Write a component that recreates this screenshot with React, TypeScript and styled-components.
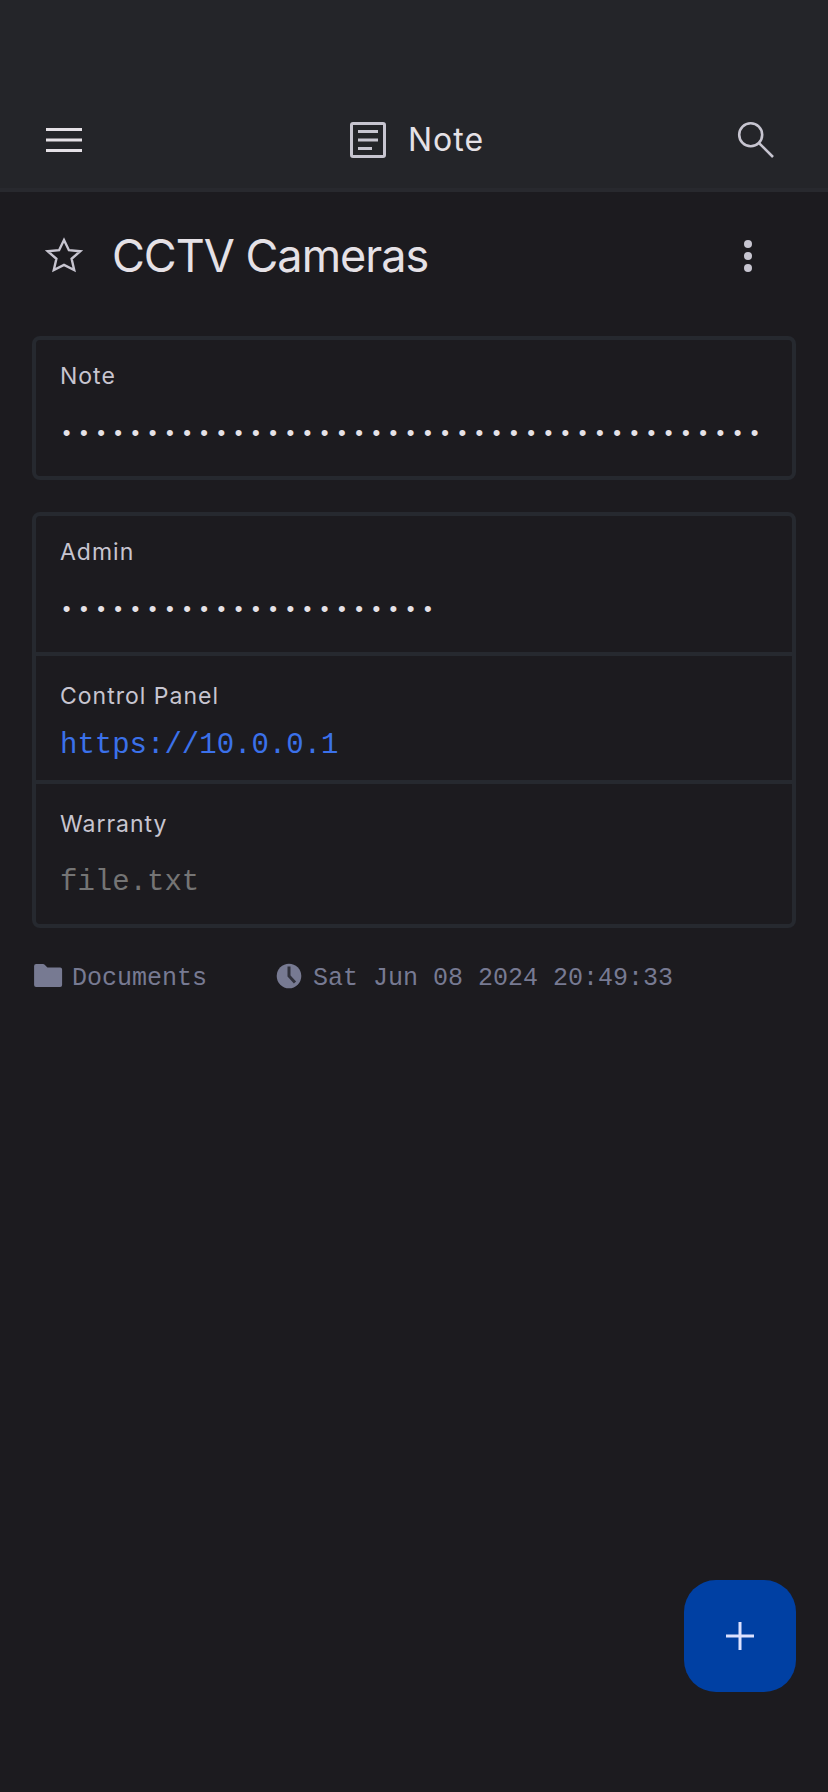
import React from "react";
import styled, { createGlobalStyle } from "styled-components";

const GlobalStyle = createGlobalStyle`
  *, *::before, *::after { box-sizing: border-box; }
  body {
    margin: 0;
    background: #1c1b1f;
    color: #e5e1e6;
    font-family: Inter, "Liberation Sans", sans-serif;
  }
`;

const mono = `"Liberation Mono", "DejaVu Sans Mono", monospace`;

const Page = styled.div`
  min-height: 100vh;
  display: flex;
  flex-direction: column;
`;

const Header = styled.header`
  display: grid;
  grid-template-columns: 1fr auto 1fr;
  align-items: center;
  padding: 92px 40px 0;
  height: 192px;
  background: #242529;
  border-bottom: 4px solid #28292e;
`;

const IconButton = styled.button<{ $bright?: boolean }>`
  flex: none;
  width: 48px;
  height: 48px;
  padding: 0;
  border: 0;
  background: none;
  color: ${(p) => (p.$bright ? "#e5e1e6" : "#c7c5d0")};
  cursor: pointer;
`;

const SearchButton = styled(IconButton)`
  justify-self: end;
  margin-right: 8px;
`;

const Icon = styled.svg`
  display: block;
  flex: none;
  width: 48px;
  height: 48px;
`;

const Heading = styled.div`
  display: flex;
  align-items: center;
  gap: 16px;
  color: #c7c5d0;
`;

const HeadingText = styled.h2`
  margin: 0;
  color: #e5e1e6;
  font-size: 32px;
  line-height: 40px;
  font-weight: 400;
  letter-spacing: 1px;
`;

const Main = styled.main`
  display: flex;
  flex-direction: column;
`;

const TitleBar = styled.div`
  display: flex;
  align-items: center;
  height: 128px;
  padding: 0 56px 0 40px;
  gap: 24px;
`;

const Title = styled.h1`
  flex: 1;
  margin: 0;
  font-size: 45px;
  line-height: 56px;
  font-weight: 400;
  letter-spacing: -1px;
`;

const Fields = styled.div`
  display: flex;
  flex-direction: column;
  gap: 32px;
  padding: 16px 32px 0;
`;

const Card = styled.section`
  border: 4px solid #26292f;
  border-radius: 8px;
`;

const Field = styled.div<{ $roomy?: boolean }>`
  display: flex;
  flex-direction: column;
  gap: 8px;
  padding: ${(p) => (p.$roomy ? "24px 24px 8px" : "20px 24px 8px")};

  & + & {
    border-top: 4px solid #26292f;
  }
`;

const Label = styled.label`
  font-size: 23px;
  line-height: 32px;
  font-weight: 400;
  letter-spacing: 1px;
  color: #c7c5d0;
`;

const Value = styled.input<{ $muted?: boolean }>`
  width: 100%;
  height: 68px;
  padding: 0;
  border: 0;
  outline: 0;
  background: none;
  font-family: ${mono};
  font-size: 29px;
  color: ${(p) => (p.$muted ? "#757575" : "#e5e1e6")};

  &[type="password"] {
    font-size: 22px;
    letter-spacing: 4px;
  }
`;

const ValueLink = styled.a`
  align-self: flex-start;
  font-family: ${mono};
  font-size: 29px;
  line-height: 52px;
  color: #3b71ea;
  text-decoration: none;
`;

const Meta = styled.footer`
  display: flex;
  gap: 66px;
  padding: 32px 32px 0;
  color: #777a92;
`;

const MetaItem = styled.div`
  display: flex;
  align-items: flex-start;
  gap: 8px;
  font-family: ${mono};
  font-size: 25px;
  line-height: 38px;
`;

const SmallIcon = styled.svg`
  display: block;
  width: 32px;
  height: 32px;
`;

const AddButton = styled.button`
  position: fixed;
  right: 32px;
  bottom: 100px;
  display: grid;
  place-items: center;
  width: 112px;
  height: 112px;
  padding: 0;
  border: 0;
  border-radius: 32px;
  background: #0040a3;
  color: #dce1ff;
  cursor: pointer;
`;

export default function App() {
  return (
    <Page>
      <GlobalStyle />
      <Header>
        <IconButton $bright aria-label="Menu">
          <Icon viewBox="0 0 48 48" fill="currentColor">
            <path d="M6 12h36v3H6zM6 22.5h36v3H6zM6 33h36v3H6z" />
          </Icon>
        </IconButton>
        <Heading>
          <Icon viewBox="0 0 48 48" fill="none" stroke="currentColor" strokeWidth="3" aria-hidden="true">
            <rect x="7.5" y="7.5" width="33" height="33" rx="1.5" />
            <path d="M14 15.5h20M14 24h20M14 32.5h14" />
          </Icon>
          <HeadingText>Note</HeadingText>
        </Heading>
        <SearchButton aria-label="Search">
          <Icon viewBox="0 0 48 48" fill="none" stroke="currentColor" strokeWidth="2.6">
            <circle cx="18.7" cy="18.7" r="11.5" />
            <path d="M26.8 26.8L41 41" />
          </Icon>
        </SearchButton>
      </Header>
      <Main>
        <TitleBar>
          <IconButton aria-label="Favorite">
            <Icon viewBox="0 0 48 48" fill="none" stroke="currentColor" strokeWidth="2.4" strokeMiterlimit="8">
              <path d="M24 8l4.900 10.200 11.400 1-8.700 7.600 2.600 11.200L24 32.900 13.800 38l2.600-11.200-8.700-7.600 11.400-1z" />
            </Icon>
          </IconButton>
          <Title>CCTV Cameras</Title>
          <IconButton aria-label="More options">
            <Icon viewBox="0 0 48 48" fill="currentColor">
              <circle cx="24" cy="12" r="4" />
              <circle cx="24" cy="24" r="4" />
              <circle cx="24" cy="36" r="4" />
            </Icon>
          </IconButton>
        </TitleBar>
        <Fields>
          <Card>
            <Field>
              <Label htmlFor="note">Note</Label>
              <Value id="note" type="password" readOnly value={"x".repeat(41)} />
            </Field>
          </Card>
          <Card>
            <Field>
              <Label htmlFor="admin">Admin</Label>
              <Value id="admin" type="password" readOnly value={"x".repeat(22)} />
            </Field>
            <Field $roomy>
              <Label as="span">Control Panel</Label>
              <ValueLink href="https://10.0.0.1">https://10.0.0.1</ValueLink>
            </Field>
            <Field $roomy>
              <Label htmlFor="warranty">Warranty</Label>
              <Value id="warranty" $muted type="text" readOnly value="file.txt" />
            </Field>
          </Card>
        </Fields>
        <Meta>
          <MetaItem>
            <SmallIcon viewBox="0 0 32 32" fill="currentColor" aria-hidden="true">
              <path d="M4 4h7q1 0 1.700.8l2.200 2.200q.5.500 1.200.500h12q2 0 2 2v15.500q0 2-2 2h-24q-2 0-2-2V6q0-2 2-2z" />
            </SmallIcon>
            Documents
          </MetaItem>
          <MetaItem>
            <SmallIcon viewBox="0 0 32 32" aria-hidden="true">
              <circle cx="16" cy="16" r="12.300" fill="currentColor" />
              <path d="M16 6.500V16l6 6.500" fill="none" stroke="#30313b" strokeWidth="3" />
            </SmallIcon>
            Sat Jun 08 2024 20:49:33
          </MetaItem>
        </Meta>
      </Main>
      <AddButton aria-label="Add">
        <Icon viewBox="0 0 48 48" fill="none" stroke="currentColor" strokeWidth="3">
          <path d="M24 10v28M10 24h28" />
        </Icon>
      </AddButton>
    </Page>
  );
}
